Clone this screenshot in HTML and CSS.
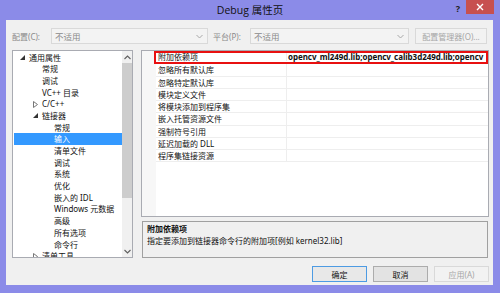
FILE: index.html
```html
<!DOCTYPE html>
<html lang="zh">
<head>
<meta charset="utf-8">
<link rel="stylesheet" href="styles.css">
</head>
<body>
<div class="win">
  <div class="titlebar">
    <div class="tb-side"></div>
    <div class="title">Debug 属性页</div>
    <div class="tb-side tb-right">
      <span class="help">?</span>
      <span class="close"><svg width="8" height="8" viewBox="0 0 8 8"><path d="M1 1L7 7M7 1L1 7" stroke="#fff" stroke-width="1.4"/></svg></span>
    </div>
  </div>
  <div class="client">
    <div class="cfgrow">
      <span class="lbl lbl1">配置(C):</span>
      <div class="combo c1"><span>不适用</span><svg width="7" height="5" viewBox="0 0 7 5"><path d="M0.5 1L3.5 4L6.5 1" fill="none" stroke="#a8a8a8" stroke-width="1"/></svg></div>
      <span class="lbl lbl2">平台(P):</span>
      <div class="combo c2"><span>不适用</span><svg width="7" height="5" viewBox="0 0 7 5"><path d="M0.5 1L3.5 4L6.5 1" fill="none" stroke="#a8a8a8" stroke-width="1"/></svg></div>
      <div class="btn cfgmgr dis">配置管理器(O)...</div>
    </div>
    <div class="main">
      <div class="tree">
        <div class="items">
          <div class="it l0"><span class="tw"><svg width="5" height="5" viewBox="0 0 5 5"><path d="M5 0V5H0Z" fill="#333"/></svg></span>通用属性</div>
          <div class="it l1"><span class="tw"></span>常规</div>
          <div class="it l1"><span class="tw"></span>调试</div>
          <div class="it l1"><span class="tw"></span>VC++ 目录</div>
          <div class="it l1"><span class="tw"><svg width="5" height="7" viewBox="0 0 5 7"><path d="M0.5 0.5L4.5 3.5L0.5 6.5Z" fill="none" stroke="#777" stroke-width="1"/></svg></span>C/C++</div>
          <div class="it l1"><span class="tw"><svg width="5" height="5" viewBox="0 0 5 5"><path d="M5 0V5H0Z" fill="#333"/></svg></span>链接器</div>
          <div class="it l2"><span class="tw"></span>常规</div>
          <div class="it l2 sel"><span class="tw"></span>输入</div>
          <div class="it l2"><span class="tw"></span>清单文件</div>
          <div class="it l2"><span class="tw"></span>调试</div>
          <div class="it l2"><span class="tw"></span>系统</div>
          <div class="it l2"><span class="tw"></span>优化</div>
          <div class="it l2"><span class="tw"></span>嵌入的 IDL</div>
          <div class="it l2"><span class="tw"></span>Windows 元数据</div>
          <div class="it l2"><span class="tw"></span>高级</div>
          <div class="it l2"><span class="tw"></span>所有选项</div>
          <div class="it l2"><span class="tw"></span>命令行</div>
          <div class="it l1"><span class="tw"><svg width="5" height="7" viewBox="0 0 5 7"><path d="M0.5 0.5L4.5 3.5L0.5 6.5Z" fill="none" stroke="#777" stroke-width="1"/></svg></span>清单工具</div>
        </div>
        <div class="vscroll">
          <div class="sarrow"><svg width="7" height="5" viewBox="0 0 7 5"><path d="M0.5 4L3.5 1L6.5 4" fill="none" stroke="#606060" stroke-width="1.1"/></svg></div>
          <div class="thumb"></div>
          <div class="track"></div>
          <div class="sarrow"><svg width="7" height="5" viewBox="0 0 7 5"><path d="M0.5 1L3.5 4L6.5 1" fill="none" stroke="#606060" stroke-width="1.1"/></svg></div>
        </div>
      </div>
      <div class="right">
        <div class="grid">
          <div class="gutter"></div>
          <div class="rows">
            <div class="row hl"><span class="nm">附加依赖项</span><span class="val">opencv_ml249d.lib;opencv_calib3d249d.lib;opencv</span></div>
            <div class="row"><span class="nm">忽略所有默认库</span><span class="val"></span></div>
            <div class="row"><span class="nm">忽略特定默认库</span><span class="val"></span></div>
            <div class="row"><span class="nm">模块定义文件</span><span class="val"></span></div>
            <div class="row"><span class="nm">将模块添加到程序集</span><span class="val"></span></div>
            <div class="row"><span class="nm">嵌入托管资源文件</span><span class="val"></span></div>
            <div class="row"><span class="nm">强制符号引用</span><span class="val"></span></div>
            <div class="row"><span class="nm">延迟加载的 DLL</span><span class="val"></span></div>
            <div class="row"><span class="nm">程序集链接资源</span><span class="val"></span></div>
          </div>
        </div>
        <div class="desc">
          <div class="dtitle">附加依赖项</div>
          <div class="dtext">指定要添加到链接器命令行的附加项[例如 kernel32.lib]</div>
        </div>
      </div>
    </div>
    <div class="btnrow">
      <div class="btn pb ok">确定</div>
      <div class="btn pb">取消</div>
      <div class="btn pb dis">应用(A)</div>
    </div>
  </div>
</div>
</body>
</html>
```

FILE: styles.css
```css
* { box-sizing: border-box; }
html, body { margin: 0; padding: 0; }
body {
  width: 500px;
  height: 293px;
  background: #8b8be8;
  font-family: "Noto Sans", "Noto Sans CJK SC", sans-serif;
  font-size: 8px;
  color: #111;
  overflow: hidden;
}
.win { width: 500px; height: 293px; display: flex; flex-direction: column; }
.titlebar {
  height: 20px;
  display: grid;
  grid-template-columns: 1fr auto 1fr;
  align-items: start;
}
.title {
  font-size: 10.5px;
  line-height: 20px;
  color: #111;
  font-family: "Open Sans", "Noto Sans CJK SC", sans-serif;
}
.tb-right { display: flex; justify-content: flex-end; align-items: flex-start; }
.help {
  font-weight: bold;
  font-size: 9px;
  color: #222;
  line-height: 14px;
  margin-right: 6px;
  margin-top: 2px;
}
.close {
  width: 28px;
  height: 14px;
  background: #c75050;
  display: flex;
  align-items: center;
  justify-content: center;
  margin-right: 6px;
}
.client {
  margin: 0 7px 8px 6px;
  height: 265px;
  background: #f0f0f0;
  padding: 8px 4px 3px 6px;
  display: flex;
  flex-direction: column;
}
.cfgrow { height: 16px; display: flex; align-items: center; margin-right: 2px; }
.lbl { color: #8a8a8a; white-space: nowrap; }
.lbl1 { width: 39px; }
.lbl2 { width: 37px; margin-left: 5px; }
.combo {
  height: 16px;
  border: 1px solid #d9d9d9;
  background: #f3f3f3;
  color: #8a8a8a;
  display: flex;
  align-items: center;
  justify-content: space-between;
  padding: 0 4px 0 3px;
  font-size: 8.5px;
}
.c1 { width: 157px; }
.c2 { width: 159px; }
.btn {
  height: 16px;
  display: flex;
  align-items: center;
  justify-content: center;
  border: 1px solid #acacac;
  background: #e3e3e3;
  white-space: nowrap;
}
.btn.dis { border-color: #d9d9d9; background: #f2f2f2; color: #a6a6a6; }
.cfgmgr { width: 72px; margin-left: 6px; }
.main { height: 208px; margin-top: 6px; display: flex; gap: 8px; }
.tree {
  width: 121px;
  height: 208px;
  border: 1px solid #a9abb2;
  background: #fff;
  display: flex;
  overflow: hidden;
}
.items { flex: 1; padding-top: 0.5px; overflow: hidden; }
.it {
  height: 11.7px;
  line-height: 11.7px;
  display: flex;
  align-items: center;
  white-space: nowrap;
  margin-left: 1px;
}
.it .tw { width: 9px; flex: none; display: flex; align-items: center; }
.l0 { padding-left: 6px; }
.l1 { padding-left: 19px; }
.l2 { padding-left: 31px; }
.sel { background: #3399ff; color: #fff; }
.vscroll { width: 10px; display: flex; flex-direction: column; background: #f0f0f0; }
.sarrow { height: 12px; display: flex; align-items: center; justify-content: center; background: #f0f0f0; flex: none; }
.thumb { height: 135px; background: #cdcdcd; flex: none; }
.track { flex: 1; background: #f0f0f0; }
.right { flex: 1; display: flex; flex-direction: column; gap: 4px; }
.grid {
  height: 167px;
  border: 1px solid #a9abb2;
  background: #fff;
  display: flex;
}
.gutter { width: 14px; background: #f7f7f7; flex: none; }
.rows { flex: 1; }
.row {
  height: 12.25px;
  display: flex;
  align-items: center;
  border-bottom: 1px solid #eeeeee;
  position: relative;
  white-space: nowrap;
}
.row.hl { height: 13.25px; padding-bottom: 2px; padding-top: 1px; }
.nm { width: 131px; padding-left: 2px; flex: none; height: 100%; display: flex; align-items: center; border-right: 1px solid #eeeeee; }
.val { flex: 1; padding-left: 1px; font-weight: bold; overflow: hidden; font-size: 8px; line-height: 11px; letter-spacing: -0.05px; }
.hl::after {
  content: "";
  position: absolute;
  left: -2px;
  right: 0;
  top: 0;
  bottom: -1px;
  border: 2px solid #e81010;
}
.desc {
  height: 37px;
  border: 1px solid #a0a0a0;
  background: #f0f0f0;
  padding: 1px 4px;
  margin: 0 1px;
}
.dtitle { font-weight: bold; line-height: 12px; }
.dtext { line-height: 12px; }
.btnrow { height: 16px; margin-top: 8px; display: flex; justify-content: flex-end; gap: 6px; }
.pb { width: 55px; }
.ok { border-color: #4d9be3; background: #e8e8e8; }
```
